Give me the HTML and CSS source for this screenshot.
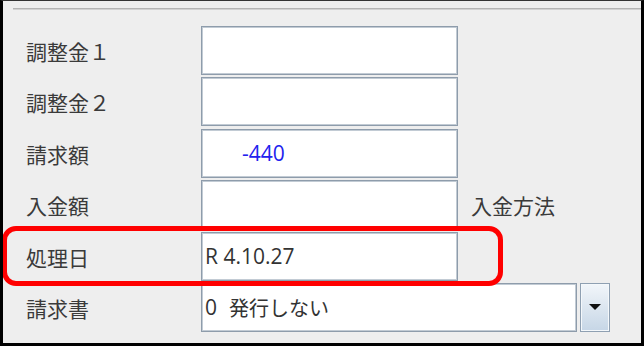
FILE: index.html
```html
<!DOCTYPE html>
<html lang="ja">
<head>
<meta charset="utf-8">
<link rel="stylesheet" href="styles.css">
</head>
<body>
<div class="frame">
  <div class="sep"></div>
  <div class="form">
    <div class="label">調整金１</div>
    <div class="field"></div>
    <div class="side"></div>

    <div class="label">調整金２</div>
    <div class="field"></div>
    <div class="side"></div>

    <div class="label">請求額</div>
    <div class="field"><span class="val val-amount">-440</span></div>
    <div class="side"></div>

    <div class="label">入金額</div>
    <div class="field"></div>
    <div class="side">入金方法</div>

    <div class="label">処理日</div>
    <div class="field"><span class="val">R 4.10.27</span></div>
    <div class="side"></div>

    <div class="label">請求書</div>
    <div class="combo">
      <div class="combo-box"><span class="val">0</span><span class="combo-text">発行しない</span></div>
      <div class="combo-btn">
        <svg width="14" height="8" viewBox="0 0 14 8"><path d="M1 1 L13 1 L7 7 Z" fill="#111"/></svg>
      </div>
    </div>
  </div>
  <div class="highlight"></div>
</div>
</body>
</html>
```
FILE: styles.css
```css
html, body {
  margin: 0;
  padding: 0;
  background: #eeeeee;
}
.frame {
  position: relative;
  box-sizing: border-box;
  width: 644px;
  height: 346px;
  background: #eeeeee;
  border-left: 3px solid #000;
  border-right: 3px solid #000;
  border-bottom: 3px solid #000;
  border-top: 1px solid #333;
  overflow: hidden;
}
.sep {
  margin: 7px 0 0 10px;
  height: 1px;
  background: #b4b4b4;
  border-bottom: 1px solid #d2d2d2;
}
.form {
  display: grid;
  grid-template-columns: 175px 257px auto;
  grid-auto-rows: 49px;
  row-gap: 2.4px;
  margin-top: 16px;
  padding-left: 23px;
  align-items: stretch;
}
.label {
  display: flex;
  align-items: center;
  padding-top: 1px;
  font-family: "Noto Sans CJK JP", sans-serif;
  font-size: 21px;
  color: #3a3a3a;
}
.field {
  box-sizing: border-box;
  background: #fff;
  border: 1px solid #8e9cab;
  box-shadow: inset 0 0 0 1px #c2cbd4;
  display: flex;
  align-items: center;
}
.side {
  display: flex;
  align-items: center;
  padding-top: 1px;
  padding-left: 13px;
  font-family: "Noto Sans CJK JP", sans-serif;
  font-size: 21px;
  color: #3a3a3a;
}
.val {
  font-family: "Open Sans", sans-serif;
  font-size: 21px;
  color: #333;
  padding-left: 3px;
}
.val-amount {
  color: #2222ee;
  padding-left: 40px;
}
.combo {
  grid-column: 2 / 4;
  display: flex;
  gap: 3px;
}
.combo-box {
  box-sizing: border-box;
  width: 376px;
  background: #fff;
  border: 1px solid #8e9cab;
  box-shadow: inset 0 0 0 1px #c2cbd4;
  display: flex;
  align-items: center;
}
.combo-text {
  font-family: "Noto Sans CJK JP", sans-serif;
  font-size: 20px;
  color: #333;
  margin-left: 12px;
}
.combo-btn {
  box-sizing: border-box;
  width: 30px;
  border: 1px solid #8fa0b2;
  box-shadow: inset 0 0 0 1px #f4f8fb;
  background: linear-gradient(#f2f6fa, #c6d6e6);
  display: flex;
  align-items: center;
  justify-content: center;
}
.highlight {
  position: absolute;
  left: -1px;
  top: 225px;
  width: 501px;
  height: 60px;
  box-sizing: border-box;
  border: 5.5px solid #ff0000;
  border-radius: 14px;
}
```
